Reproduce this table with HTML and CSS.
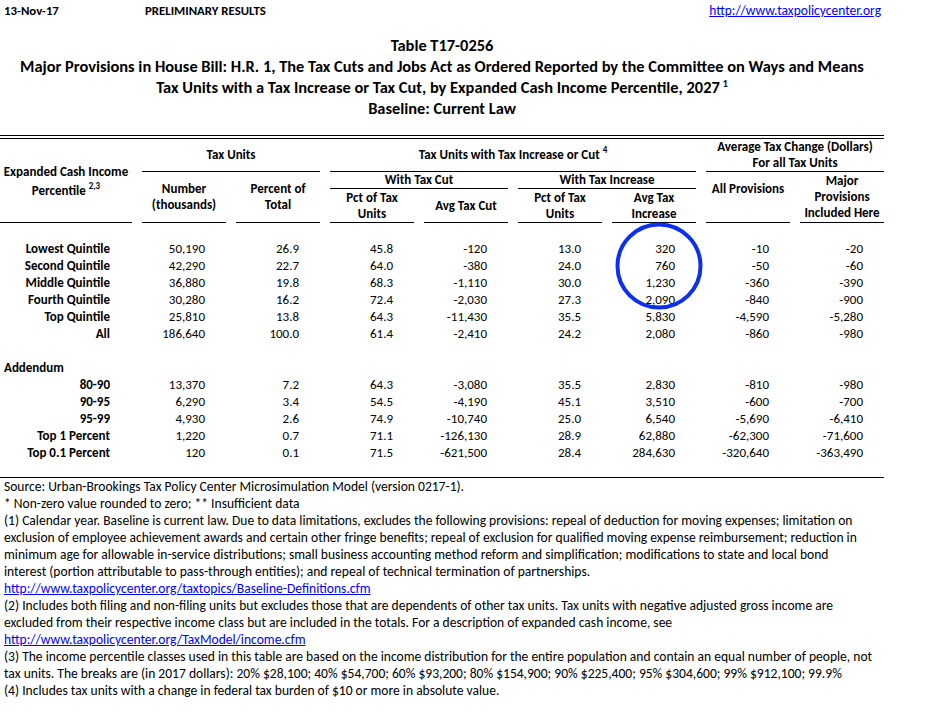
FILE: index.html
```html
<!DOCTYPE html>
<html lang="en">
<head>
  <meta charset="UTF-8" />
  <title>Table T17-0256</title>
  <link rel="stylesheet" href="styles.css">
</head>
<body>

<div class="page">

  <div class="topbar">
    <span class="date">13-Nov-17</span>
    <span class="prelim">PRELIMINARY RESULTS</span>
    <a class="site" href="#">http://www.taxpolicycenter.org</a>
  </div>

  <div class="title">
    <div>Table T17-0256</div>
    <div>Major Provisions in House Bill: H.R. 1, The Tax Cuts and Jobs Act as Ordered Reported by the Committee on Ways and Means</div>
    <div>Tax Units with a Tax Increase or Tax Cut, by Expanded Cash Income Percentile, 2027<sup>1</sup></div>
    <div>Baseline: Current Law</div>
  </div>

  <div class="double-rule"></div>

  <table class="results">
    <colgroup>
      <col class="c-label">
      <col class="c-num"><col class="c-num"><col class="c-num"><col class="c-num">
      <col class="c-num"><col class="c-num"><col class="c-num"><col class="c-num">
    </colgroup>
    <thead>
      <tr class="hrow-a">
        <th rowspan="3" class="h-label">Expanded Cash Income<br>Percentile <sup>2,3</sup></th>
        <th colspan="2" class="rule">Tax Units</th>
        <th colspan="4" class="rule">Tax Units with Tax Increase or Cut <sup>4</sup></th>
        <th colspan="2" class="rule">Average Tax Change (Dollars)<br>For all Tax Units</th>
      </tr>
      <tr class="hrow-b">
        <th rowspan="2" class="rule">Number<br>(thousands)</th>
        <th rowspan="2" class="rule">Percent of<br>Total</th>
        <th colspan="2" class="rule">With Tax Cut</th>
        <th colspan="2" class="rule">With Tax Increase</th>
        <th rowspan="2" class="rule">All Provisions<br>&nbsp;</th>
        <th rowspan="2" class="rule">Major<br>Provisions<br>Included Here</th>
      </tr>
      <tr class="hrow-c">
        <th class="rule">Pct of Tax<br>Units</th>
        <th class="rule">Avg Tax Cut</th>
        <th class="rule">Pct of Tax<br>Units</th>
        <th class="rule">Avg Tax<br>Increase</th>
      </tr>
    </thead>
    <tbody>
      <tr class="gap"><td colspan="9"></td></tr>
      <tr><th>Lowest Quintile</th><td>50,190</td><td>26.9</td><td>45.8</td><td>-120</td><td>13.0</td><td>320</td><td>-10</td><td>-20</td></tr>
      <tr><th>Second Quintile</th><td>42,290</td><td>22.7</td><td>64.0</td><td>-380</td><td>24.0</td><td>760</td><td>-50</td><td>-60</td></tr>
      <tr><th>Middle Quintile</th><td>36,880</td><td>19.8</td><td>68.3</td><td>-1,110</td><td>30.0</td><td>1,230</td><td>-360</td><td>-390</td></tr>
      <tr><th>Fourth Quintile</th><td>30,280</td><td>16.2</td><td>72.4</td><td>-2,030</td><td>27.3</td><td>2,090</td><td>-840</td><td>-900</td></tr>
      <tr><th>Top Quintile</th><td>25,810</td><td>13.8</td><td>64.3</td><td>-11,430</td><td>35.5</td><td>5,830</td><td>-4,590</td><td>-5,280</td></tr>
      <tr><th>All</th><td>186,640</td><td>100.0</td><td>61.4</td><td>-2,410</td><td>24.2</td><td>2,080</td><td>-860</td><td>-980</td></tr>
      <tr class="gap"><td colspan="9"></td></tr>
      <tr><th class="addendum" colspan="9">Addendum</th></tr>
      <tr><th>80-90</th><td>13,370</td><td>7.2</td><td>64.3</td><td>-3,080</td><td>35.5</td><td>2,830</td><td>-810</td><td>-980</td></tr>
      <tr><th>90-95</th><td>6,290</td><td>3.4</td><td>54.5</td><td>-4,190</td><td>45.1</td><td>3,510</td><td>-600</td><td>-700</td></tr>
      <tr><th>95-99</th><td>4,930</td><td>2.6</td><td>74.9</td><td>-10,740</td><td>25.0</td><td>6,540</td><td>-5,690</td><td>-6,410</td></tr>
      <tr><th>Top 1 Percent</th><td>1,220</td><td>0.7</td><td>71.1</td><td>-126,130</td><td>28.9</td><td>62,880</td><td>-62,300</td><td>-71,600</td></tr>
      <tr><th>Top 0.1 Percent</th><td>120</td><td>0.1</td><td>71.5</td><td>-621,500</td><td>28.4</td><td>284,630</td><td>-320,640</td><td>-363,490</td></tr>
      <tr class="gap end"><td colspan="9"></td></tr>
    </tbody>
  </table>

  <div class="notes">
    <div>Source: Urban-Brookings Tax Policy Center Microsimulation Model (version 0217-1).</div>
    <div>* Non-zero value rounded to zero; ** Insufficient data</div>
    <div>(1) Calendar year. Baseline is current law. Due to data limitations, excludes the following provisions: repeal of deduction for moving expenses; limitation on</div>
    <div>exclusion of employee achievement awards and certain other fringe benefits; repeal of exclusion for qualified moving expense reimbursement; reduction in</div>
    <div>minimum age for allowable in-service distributions; small business accounting method reform and simplification; modifications to state and local bond</div>
    <div>interest (portion attributable to pass-through entities); and repeal of technical termination of partnerships.</div>
    <div><a href="#">http://www.taxpolicycenter.org/taxtopics/Baseline-Definitions.cfm</a></div>
    <div>(2) Includes both filing and non-filing units but excludes those that are dependents of other tax units. Tax units with negative adjusted gross income are</div>
    <div>excluded from their respective income class but are included in the totals. For a description of expanded cash income, see</div>
    <div><a href="#">http://www.taxpolicycenter.org/TaxModel/income.cfm</a></div>
    <div>(3) The income percentile classes used in this table are based on the income distribution for the entire population and contain an equal number of people, not</div>
    <div>tax units. The breaks are (in 2017 dollars): 20% $28,100; 40% $54,700; 60% $93,200; 80% $154,900; 90% $225,400; 95% $304,600; 99% $912,100; 99.9%</div>
    <div>(4) Includes tax units with a change in federal tax burden of $10 or more in absolute value.</div>
  </div>

  <svg class="highlight" width="88" height="88" viewBox="0 0 88 88">
    <ellipse cx="44" cy="44" rx="41.5" ry="41.5" fill="none" stroke="#0c2ff0" stroke-width="4"/>
  </svg>

</div>

</body>
</html>
```

FILE: styles.css
```css
body {
  margin: 0;
  background: #ffffff;
  color: #000000;
  font-family: Calibri, Carlito, Lato, sans-serif;
}
.page {
  position: relative;
  width: 904px;
}
a {
  color: #0000ff;
  text-decoration: underline;
}

/* top bar */
.topbar {
  display: flex;
  align-items: center;
  height: 20px;
  padding-left: 4px;
  font-size: 12.8px;
  font-weight: bold;
}
.topbar .date {
  width: 141px;
}
.topbar .site {
  margin-left: auto;
  margin-right: 23px;
  font-weight: normal;
  font-size: 13.5px;
}

/* title */
.title {
  width: 884px;
  margin-top: 15px;
  text-align: center;
  font-weight: bold;
  font-size: 16.4px;
  line-height: 21px;
}
.title sup {
  font-size: 10px;
  line-height: 0;
  margin-left: 3px;
}

.double-rule {
  width: 884px;
  height: 2px;
  margin-top: 16px;
  border-top: 1px solid #000;
  border-bottom: 1px solid #000;
}

/* table */
.results {
  width: 904px;
  margin-left: -10px;
  table-layout: fixed;
  border-collapse: separate;
  border-spacing: 10px 0;
  font-size: 13px;
}
.c-label { width: 132px; }
.c-num { width: 84px; }
.results th,
.results td {
  padding: 0;
  height: 17px;
  line-height: 17px;
  white-space: nowrap;
}
.results thead th {
  text-align: center;
  vertical-align: middle;
  font-weight: bold;
  line-height: 16px;
}
.results thead .rule,
.results thead .h-label {
  border-bottom: 1px solid #000;
}
.results .hrow-a th { height: 32px; }
.results .hrow-b th { height: 16px; }
.results .hrow-c th { height: 33px; }
.results thead .h-label {
  line-height: 19px;
}
.results sup {
  font-size: 9px;
  line-height: 0;
  vertical-align: 6px;
}
.results tbody th {
  text-align: right;
  padding-right: 22px;
  font-weight: bold;
}
.results tbody td {
  text-align: right;
  padding-right: 21px;
}
.results tbody th.addendum {
  text-align: left;
  padding-left: 4px;
}
.results .end td {
  height: 16px;
  border-bottom: 1px solid #000;
}

/* footnotes */
.notes {
  padding-left: 4px;
  font-size: 13.55px;
  line-height: 17px;
  white-space: nowrap;
}

.highlight {
  position: absolute;
  left: 615px;
  top: 222px;
}
```
